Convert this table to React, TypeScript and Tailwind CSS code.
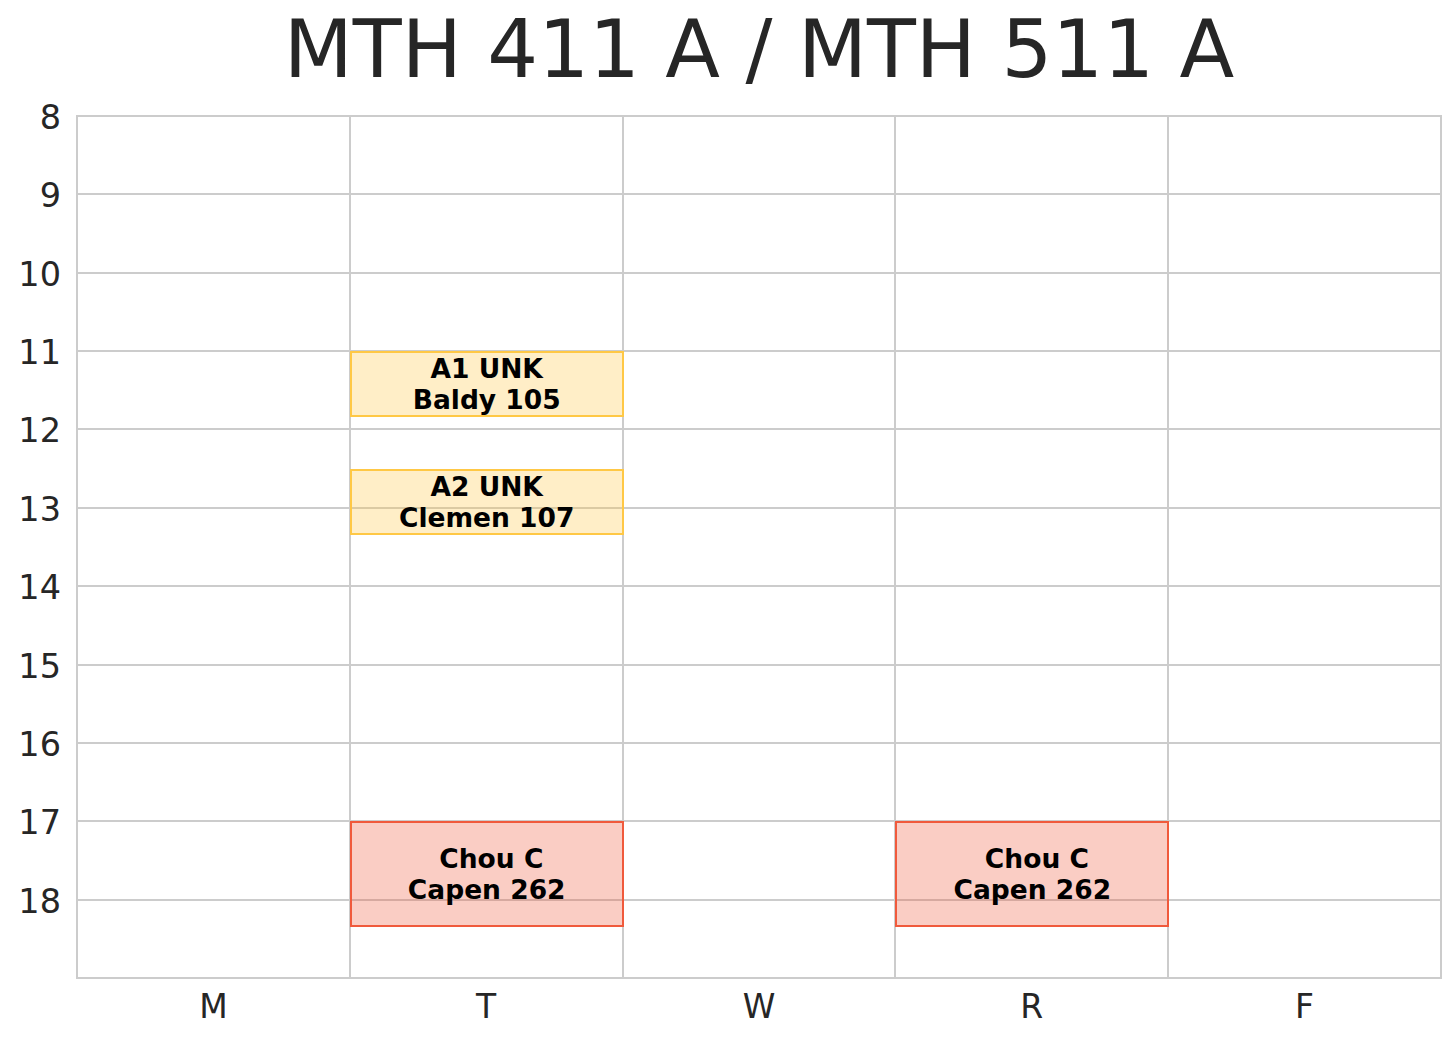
import React from 'react';

type ClassBlock = {
  day: number;
  start: number;
  end: number;
  lines: string[];
  kind: 'lab' | 'lecture';
};

const days = ['M', 'T', 'W', 'R', 'F'];
const hours = [8, 9, 10, 11, 12, 13, 14, 15, 16, 17, 18];

const COL_W = 272.8;
const HOUR_H = 78.36;

const blocks: ClassBlock[] = [
  { day: 1, start: 11, end: 11 + 50 / 60, lines: ['A1 UNK', 'Baldy 105'], kind: 'lab' },
  { day: 1, start: 12.5, end: 13 + 20 / 60, lines: ['A2 UNK', 'Clemen 107'], kind: 'lab' },
  { day: 1, start: 17, end: 18 + 20 / 60, lines: ['\u00a0Chou C', 'Capen 262'], kind: 'lecture' },
  { day: 3, start: 17, end: 18 + 20 / 60, lines: ['\u00a0Chou C', 'Capen 262'], kind: 'lecture' },
];

export default function App() {
  return (
    <div
      className="w-[1456px] h-[1040px] bg-white text-[#262626] overflow-hidden"
      style={{ fontFamily: '"DejaVu Sans", "Liberation Sans", sans-serif' }}
    >
      {/* title */}
      <div className="h-[116px] pl-[77px] pr-[15px] flex flex-col">
        <h1 className="-mt-[10px] text-center text-[80px] leading-normal font-normal">MTH 411 A / MTH 511 A</h1>
      </div>

      <div className="flex">
        {/* hour labels */}
        <div className="w-[77px] flex flex-col">
          {hours.map((h) => (
            <div key={h} className="h-[78.36px] pr-[16px]">
              <div className="text-right text-[33.5px] leading-none -translate-y-[45%]">{h}</div>
            </div>
          ))}
        </div>

        {/* plot */}
        <div className="relative -ml-[1px] -mt-[1px]">
          <div className="w-[1366px] h-[864px] grid grid-cols-5 grid-rows-11 gap-[2px] p-[2px] bg-[#cccccc]">
            {Array.from({ length: 55 }).map((_, i) => (
              <div key={i} className="bg-white" />
            ))}
          </div>

          {blocks.map((b, i) => (
            <div
              key={i}
              className={
                b.kind === 'lab'
                  ? 'absolute flex flex-col items-center justify-center border-2 border-[#ffc845] bg-[#ffc845]/30 text-black font-bold text-[26.5px] leading-[31px]'
                  : 'absolute flex flex-col items-center justify-center border-2 border-[#f05a3c] bg-[#f05a3c]/30 text-black font-bold text-[26.5px] leading-[31px]'
              }
              style={{
                left: 1 + b.day * COL_W,
                top: 1 + (b.start - 8) * HOUR_H,
                width: COL_W + 1,
                height: (b.end - b.start) * HOUR_H + 1,
              }}
            >
              {b.lines.map((l) => (
                <span key={l} className="whitespace-pre">{l}</span>
              ))}
            </div>
          ))}
        </div>
      </div>

      {/* day labels */}
      <div className="pl-[77px] w-[1441px] grid grid-cols-5 pt-[3px]">
        {days.map((d) => (
          <div key={d} className="text-center text-[33px] leading-normal">{d}</div>
        ))}
      </div>
    </div>
  );
}
